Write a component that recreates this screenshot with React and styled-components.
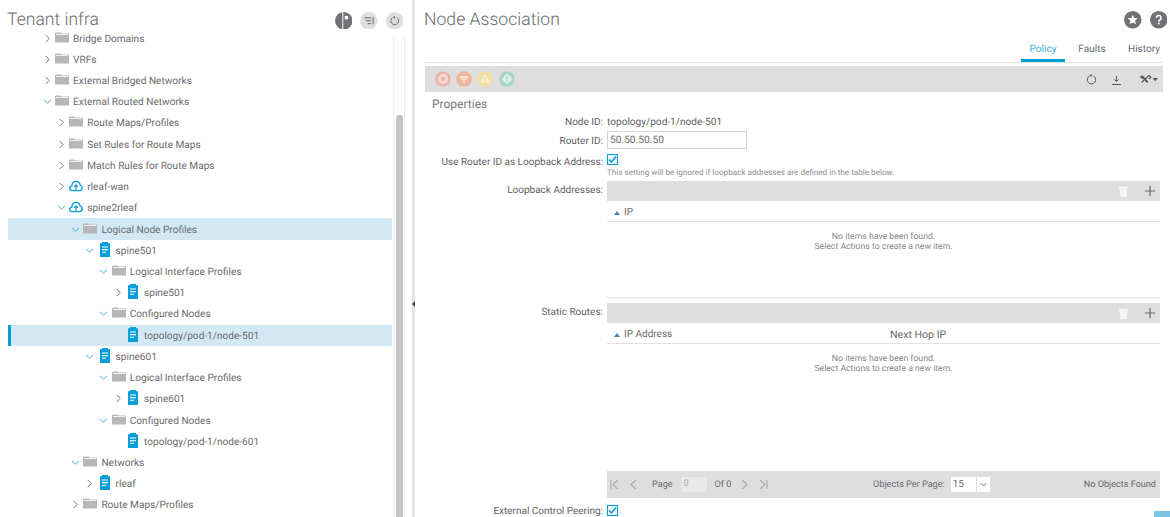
import React from 'react';
import styled, { createGlobalStyle } from 'styled-components';

const Global = createGlobalStyle`
  html, body { margin: 0; padding: 0; background: #fff; }
  body {
    font-family: Roboto, "Liberation Sans", Arial, sans-serif;
    color: #5f6063;
    overflow: hidden;
    text-rendering: geometricPrecision;
  }
`;

const Page = styled.div`
  display: flex;
  position: relative;
  width: 1170px;
  height: 517px;
  overflow: hidden;
`;
const LeftPane = styled.section`
  width: 412px;
  flex: none;
  display: flex;
  flex-direction: column;
`;
const LeftHeader = styled.header`
  height: 27.5px;
  flex: none;
  display: flex;
  align-items: center;
  padding-left: 7px;
  width: 403px;
  box-sizing: border-box;
`;
const Title = styled.h1`
  margin: 0;
  font: 300 17.6px/28px Roboto, "Liberation Sans", sans-serif;
  color: #6a6b6e;
  flex: 1;
  position: relative;
  top: 6px;
`;
const HeadIcons = styled.div`
  display: flex;
  gap: 8px;
  position: relative;
  top: 6.5px;
`;
const TreeWrap = styled.div`
  flex: 1;
  display: flex;
  min-height: 0;
`;
const Tree = styled.div`
  width: 384px;
  margin-left: 8px;
  flex: none;
`;
const Row = styled.div`
  height: 21.22px;
  box-sizing: border-box;
  display: flex;
  align-items: center;
  padding-left: ${p => 33 + p.$level * 14.2}px;
  background: ${p => (p.$active ? '#d2e9f5' : 'transparent')};
  box-shadow: ${p => (p.$bar ? 'inset 3px 0 0 #049fd9' : 'none')};
  font-size: 10.1px;
  color: #6a6b6e;
  white-space: nowrap;
`;
const RowText = styled.span`
  padding-top: 2px;
`;
const Chevron = styled.span`
  width: 12px;
  height: 12px;
  flex: none;
  display: flex;
  align-items: center;
  justify-content: center;
  margin-right: 2px;
`;
const IconSlot = styled.span`
  width: 14px;
  height: 16px;
  flex: none;
  display: flex;
  align-items: center;
  justify-content: center;
  margin-right: 4px;
  position: relative;
  top: -1px;
`;
const ScrollTrack = styled.div`
  width: 7px;
  margin-left: 1px;
  padding: 0 1px 0 2px;
  flex: none;
  border-left: 1px solid #eee;
  border-right: 1px solid #eee;
  margin-top: 6px;
  display: flex;
  flex-direction: column;
`;
const ScrollThumb = styled.div`
  margin-top: 81px;
  flex: 1;
  background: #c4c4c6;
  border-radius: 3px 3px 0 0;
`;
const Divider = styled.div`
  width: 3px;
  flex: none;
  background: #e4e4e5;
  position: relative;
  &::after {
    content: '';
    position: absolute;
    left: 0;
    top: 301px;
    border-style: solid;
    border-width: 3px 3px 3px 0;
    border-color: transparent #444 transparent transparent;
  }
`;
const RightPane = styled.section`
  flex: 1;
  min-width: 0;
  padding: 0 7px 0 10px;
  display: flex;
  flex-direction: column;
`;
const RightHead = styled.header`
  height: 42px;
  display: flex;
  align-items: center;
  flex: none;
`;
const RightTitle = styled.h2`
  margin: 0 0 0 -1px;
  font: 300 17.6px/28px Roboto, "Liberation Sans", sans-serif;
  color: #6a6b6e;
  flex: 1;
  position: relative;
  top: -1px;
`;
const RoundIcons = styled.div`
  display: flex;
  gap: 8px;
  position: relative;
  left: 4px;
  top: -1px;
`;
const Tabs = styled.nav`
  height: 20px;
  display: flex;
  justify-content: flex-end;
  border-bottom: 1px solid #e3e3e4;
  flex: none;
`;
const Tab = styled.a`
  width: ${p => p.$w}px;
  padding-left: ${p => p.$pad || 0}px;
  text-align: center;
  font-size: 10.1px;
  line-height: 15px;
  white-space: nowrap;
  color: ${p => (p.$active ? '#3aaede' : '#6a6b6e')};
  height: 20px;
  box-sizing: border-box;
  border-bottom: ${p => (p.$active ? '3px solid #049fd9' : 'none')};
`;
const Toolbar = styled.div`
  margin-top: 3px;
  height: 26px;
  background: #dedede;
  display: flex;
  align-items: center;
  padding: 0 5px 0 10px;
  flex: none;
`;
const Faults = styled.div`
  display: flex;
  gap: 5.2px;
  flex: 1;
`;
const Tools = styled.div`
  display: flex;
  align-items: center;
  gap: 14px;
`;
const SectionTitle = styled.h3`
  margin: 5px 0 0 7px;
  font: 400 12px/15px Roboto, "Liberation Sans", sans-serif;
  color: #77787b;
  flex: none;
`;
const FieldRow = styled.div`
  display: grid;
  grid-template-columns: 178px 1fr;
  column-gap: 4px;
  height: ${p => p.$h}px;
  margin-top: ${p => p.$mt || 0}px;
  margin-right: 3px;
  flex: none;
  font-size: 10.1px;
  color: #5f6063;
`;
const Label = styled.label`
  text-align: right;
  line-height: ${p => p.$lh || 22}px;
  font-size: 10px;
  white-space: nowrap;
`;
const Value = styled.div`
  line-height: 22px;
  min-width: 0;
`;
const Input = styled.div`
  width: 140px;
  height: 18px;
  box-sizing: border-box;
  border: 1px solid #d5d5d6;
  padding-left: 2px;
  font-size: 10.2px;
  line-height: 17px;
  color: #6a6b6e;
  background: #fff;
`;
const Check = styled.span`
  width: 11px;
  height: 11px;
  display: block;
  box-sizing: border-box;
  border: 1px solid #049fd9;
  background: #e9f6fb;
`;
const CheckWrap = styled.div`
  padding-top: ${p => p.$top || 0}px;
`;
const Hint = styled.div`
  font-size: 8.15px;
  line-height: 11px;
  margin-top: 2px;
  color: #8b8c8f;
  white-space: nowrap;
`;
const TableBar = styled.div`
  height: 20px;
  background: #dedede;
  display: flex;
  align-items: center;
  justify-content: flex-end;
  gap: 17px;
  padding-right: 5px;
`;
const TableHead = styled.div`
  height: 20px;
  display: grid;
  grid-template-columns: 266px 1fr;
  border-bottom: 1px solid #e3e3e4;
  line-height: 20px;
  color: #6a6b6e;
`;
const ColHead = styled.div`
  display: flex;
  align-items: center;
  padding-left: ${p => p.$pad || 0}px;
  padding-top: 2px;
  font-size: ${p => p.$fs || 10}px;
  gap: 4px;
`;
const Caret = styled.span`
  width: 0;
  height: 0;
  border-style: solid;
  border-width: 0 3px 4px 3px;
  border-color: transparent transparent #4f81b5 transparent;
`;
const Empty = styled.div`
  text-align: center;
  font-size: 8.7px;
  line-height: 10px;
  color: #85868a;
  padding-top: ${p => p.$top}px;
`;
const TableEnd = styled.div`
  height: ${p => p.$h}px;
  border-bottom: ${p => (p.$line ? '1px solid #e3e3e4' : 'none')};
`;
const Pager = styled.div`
  height: 27px;
  background: #dedede;
  display: flex;
  align-items: center;
  font-size: 9.1px;
  color: #6a6b6e;
  padding: 0 4px 0 2px;
`;
const PagerNav = styled.div`
  display: flex;
  align-items: center;
  gap: 8px;
`;
const PageLabel = styled.span`
  margin-left: 5px;
`;
const PageBox = styled.div`
  width: 26px;
  height: 15px;
  background: #e9e9ea;
  color: #aaa;
  line-height: 15px;
  padding-left: 3px;
  box-sizing: border-box;
`;
const PagerSpacer = styled.div`
  flex: 1;
`;
const Select = styled.div`
  display: flex;
  width: 39px;
  height: 15px;
  background: #fff;
  margin: 0 94px 0 6px;
  font-size: 10px;
  line-height: 15px;
  align-items: center;
  padding-left: 2px;
  box-sizing: border-box;
  justify-content: space-between;
`;
const SelectArrow = styled.span`
  width: 13px;
  height: 15px;
  border-left: 1px solid #ddd;
  display: flex;
  align-items: center;
  justify-content: center;
`;
const Corner = styled.div`
  position: absolute;
  right: 0;
  bottom: 0;
  width: 16px;
  height: 6px;
  background: #7cc4e6;
`;
const ToolsGlyph = styled.svg`
  margin-left: 3px;
`;
const TickGlyph = styled.svg`
  display: block;
`;

const Folder = () => (
  <svg width="14" height="11" viewBox="0 0 14 11">
    <path d="M0 1.4V10.5H14V1.4H6.5L5.5 .4H.8Z" fill="#b7b7ba" />
    <rect x="1" y="2" width="12" height="1" fill="#f0f0f1" />
  </svg>
);
const Doc = () => (
  <svg width="10" height="15" viewBox="0 0 10 15">
    <path d="M0 1.2H2V0H8V1.2H10V15H0Z" fill="#049fd9" />
    <path d="M2 5H8M2 7.6H8M2 10.2H6" stroke="#fff" strokeWidth="1.1" />
  </svg>
);
const Cloud = () => (
  <svg width="15" height="12" viewBox="0 0 15 12">
    <path d="M4 11H3.2C1.7 11 .7 10 .7 8.6 .7 7.3 1.7 6.3 3 6.2 3.2 3.4 5 1 7.6 1 10 1 11.6 2.8 12 5 13.4 5.4 14.3 6.5 14.3 8 14.3 9.8 13 11 11.4 11Z" fill="none" stroke="#049fd9" strokeWidth="1.4" />
    <path d="M7.5 11V5M5.5 7L7.5 4.8 9.5 7" fill="none" stroke="#049fd9" strokeWidth="1.3" />
  </svg>
);
const Chev = ({ open }) => (
  <svg width="9" height="9" viewBox="0 0 9 9">
    {open
      ? <path d="M1 2.8L4.5 6.2 8 2.8" fill="none" stroke="#4aa9d6" strokeWidth="1" />
      : <path d="M2.8 1L6.2 4.5 2.8 8" fill="none" stroke="#77787b" strokeWidth="1" />}
  </svg>
);
const icons = { folder: <Folder />, doc: <Doc />, cloud: <Cloud /> };

const treeData = [
  [0, 'r', 'folder', 'Bridge Domains'],
  [0, 'r', 'folder', 'VRFs'],
  [0, 'r', 'folder', 'External Bridged Networks'],
  [0, 'o', 'folder', 'External Routed Networks'],
  [1, 'r', 'folder', 'Route Maps/Profiles'],
  [1, 'r', 'folder', 'Set Rules for Route Maps'],
  [1, 'r', 'folder', 'Match Rules for Route Maps'],
  [1, 'r', 'cloud', 'rleaf-wan'],
  [1, 'o', 'cloud', 'spine2rleaf'],
  [2, 'o', 'folder', 'Logical Node Profiles', 'hl'],
  [3, 'o', 'doc', 'spine501'],
  [4, 'o', 'folder', 'Logical Interface Profiles'],
  [5, 'r', 'doc', 'spine501'],
  [4, 'o', 'folder', 'Configured Nodes'],
  [5, '', 'doc', 'topology/pod-1/node-501', 'sel'],
  [3, 'o', 'doc', 'spine601'],
  [4, 'o', 'folder', 'Logical Interface Profiles'],
  [5, 'r', 'doc', 'spine601'],
  [4, 'o', 'folder', 'Configured Nodes'],
  [5, '', 'doc', 'topology/pod-1/node-601'],
  [2, 'o', 'folder', 'Networks'],
  [3, 'r', 'doc', 'rleaf'],
  [2, 'r', 'folder', 'Route Maps/Profiles'],
];

const Circle = ({ fill, children }) => (
  <svg width="17.5" height="17.5" viewBox="0 0 18 18">
    <circle cx="9" cy="9" r="9" fill={fill} />
    {children}
  </svg>
);
const FaultIcon = ({ fill, children }) => (
  <svg width="16" height="16" viewBox="0 0 16 16">
    <circle cx="8" cy="8" r="7.8" fill={fill} />
    {children}
  </svg>
);
const Refresh = ({ color = '#55565a' }) => (
  <svg width="11" height="12" viewBox="0 0 11 12">
    <path d="M3.6 3A4.2 4.2 0 1 0 7.4 3" fill="none" stroke={color} strokeWidth="1" />
    <path d="M5.7 .8V3.8L3.4 2.6Z" fill={color} />
  </svg>
);
const Nav = ({ d }) => (
  <svg width="11" height="13" viewBox="0 0 11 13">
    <path d={d} fill="none" stroke="#a9a9ab" strokeWidth="1.1" />
  </svg>
);
const Trash = () => (
  <svg width="9" height="11" viewBox="0 0 9 11"><path d="M0 .5H9V2.5H8.3L7.6 11H1.4L.7 2.5H0Z" fill="#f5f5f5" /></svg>
);
const Plus = () => (
  <svg width="10" height="10" viewBox="0 0 10 10"><path d="M5 0V10M0 5H10" stroke="#66676a" strokeWidth="1.2" /></svg>
);
const Tick = () => (
  <Check>
    <TickGlyph width="9" height="9" viewBox="0 0 9 9">
      <path d="M1 4.5L3.4 7 8 1.5" fill="none" stroke="#049fd9" strokeWidth="1.5" />
    </TickGlyph>
  </Check>
);

export default function App() {
  return (
    <Page>
      <Global />
      <LeftPane>
        <LeftHeader>
          <Title>Tenant infra</Title>
          <HeadIcons>
            <Circle fill="#707175">
              <path d="M8 0V18" stroke="#fff" strokeWidth="1" />
              <path d="M10 4H13.5V7.5H10Z" fill="#fff" />
            </Circle>
            <Circle fill="#dfdfe0">
              <path d="M4.5 6H11.5M6 9H11.5M8 12H11.5M13.5 5V13" stroke="#66676a" strokeWidth="1" fill="none" />
            </Circle>
            <Circle fill="#dfdfe0">
              <path d="M6.8 5.7A4 4 0 1 0 11.2 5.7" fill="none" stroke="#66676a" strokeWidth="1" />
              <path d="M9.4 3.8V6.8L7 5.6Z" fill="#66676a" />
            </Circle>
          </HeadIcons>
        </LeftHeader>
        <TreeWrap>
          <Tree>
            {treeData.map(([level, chev, icon, text, state], i) => (
              <Row key={i} $level={level} $active={!!state} $bar={state === 'sel'}>
                <Chevron>{chev && <Chev open={chev === 'o'} />}</Chevron>
                <IconSlot>{icons[icon]}</IconSlot>
                <RowText>{text}</RowText>
              </Row>
            ))}
          </Tree>
          <ScrollTrack><ScrollThumb /></ScrollTrack>
        </TreeWrap>
      </LeftPane>
      <Divider />
      <RightPane>
        <RightHead>
          <RightTitle>Node Association</RightTitle>
          <RoundIcons>
            <Circle fill="#707175">
              <path d="M9 3.8L10.5 7.2 14.2 7.5 11.4 10 12.3 13.6 9 11.7 5.7 13.6 6.6 10 3.8 7.5 7.5 7.2Z" fill="#fff" />
            </Circle>
            <Circle fill="#707175">
              <path d="M6.6 7A2.4 2.4 0 1 1 10 9.2C9.2 9.6 9 10 9 11" fill="none" stroke="#fff" strokeWidth="1.6" />
              <rect x="8.1" y="12" width="1.8" height="1.8" fill="#fff" />
            </Circle>
          </RoundIcons>
        </RightHead>
        <Tabs>
          <Tab $active $w={44}>Policy</Tab>
          <Tab $w={54}>Faults</Tab>
          <Tab $w={44} $pad={6}>History</Tab>
        </Tabs>
        <Toolbar>
          <Faults>
            <FaultIcon fill="#ecb3ad">
              <circle cx="8" cy="8" r="5" fill="#f6dcd8" />
              <path d="M6.3 6.3L9.7 9.7M9.7 6.3L6.3 9.7" stroke="#e6a39c" strokeWidth="1.3" />
            </FaultIcon>
            <FaultIcon fill="#ecb498">
              <path d="M3.4 5H12.6L8 12.6Z" fill="#f7e2d6" />
              <path d="M8 6.5V8.6M8 9.4V10.4" stroke="#ecb498" strokeWidth="1.1" />
            </FaultIcon>
            <FaultIcon fill="#f1dfa2">
              <path d="M8 3.2L12.8 11.4H3.2Z" fill="#faf3da" />
              <path d="M8 6V8.6M8 9.4V10.4" stroke="#e3c878" strokeWidth="1.1" />
            </FaultIcon>
            <FaultIcon fill="#a9d3c8">
              <path d="M8 2.6L13.4 8 8 13.4 2.6 8Z" fill="#e0f1ec" />
              <path d="M8 5.2V8.6M8 9.5V10.8" stroke="#96c9bb" strokeWidth="1.2" />
            </FaultIcon>
          </Faults>
          <Tools>
            <Refresh />
            <svg width="11" height="11" viewBox="0 0 11 11">
              <path d="M1 10.5H10" stroke="#55565a" strokeWidth="1" />
              <path d="M5.5 2V7M3.5 5.5L5.5 7.5 7.5 5.5" fill="none" stroke="#55565a" strokeWidth="1" />
            </svg>
            <ToolsGlyph width="19" height="10" viewBox="0 0 21 10">
              <path d="M1 2.5L3.5 .8 6 3 10.5 8 9 9.5 4 4.5 2.5 4.5Z" fill="#55565a" />
              <path d="M11 1L8.5 3.5 3 8.5M11 1L13 3 11 5" fill="none" stroke="#55565a" strokeWidth="1.4" />
              <path d="M15 4H21L18 7.5Z" fill="#55565a" />
            </ToolsGlyph>
          </Tools>
        </Toolbar>
        <SectionTitle>Properties</SectionTitle>
        <FieldRow $h={19}>
          <Label>Node ID:</Label>
          <Value>topology/pod-1/node-501</Value>
        </FieldRow>
        <FieldRow $h={21}>
          <Label $lh={21}>Router ID:</Label>
          <Value><Input>50.50.50.50</Input></Value>
        </FieldRow>
        <FieldRow $h={29}>
          <Label $lh={21}>Use Router ID as Loopback Address:</Label>
          <div>
            <CheckWrap $top={2}><Tick /></CheckWrap>
            <Hint>This setting will be ignored if loopback addresses are defined in the table below.</Hint>
          </div>
        </FieldRow>
        <FieldRow $h={122}>
          <Label $lh={19}>Loopback Addresses:</Label>
          <div>
            <TableBar><Trash /><Plus /></TableBar>
            <TableHead><ColHead $pad={7}><Caret />IP</ColHead></TableHead>
            <Empty $top={10}>No items have been found.<br />Select Actions to create a new item.</Empty>
            <TableEnd $h={45} $line />
          </div>
        </FieldRow>
        <FieldRow $h={195}>
          <Label $lh={19}>Static Routes:</Label>
          <div>
            <TableBar><Trash /><Plus /></TableBar>
            <TableHead>
              <ColHead $pad={7}><Caret />IP Address</ColHead>
              <ColHead $pad={17} $fs={10.6}>Next Hop IP</ColHead>
            </TableHead>
            <Empty $top={10}>No items have been found.<br />Select Actions to create a new item.</Empty>
            <TableEnd $h={97} />
            <Pager>
              <PagerNav>
                <Nav d="M2 2V11M9 2L4 6.5 9 11" />
                <Nav d="M8 2L3 6.5 8 11" />
                <PageLabel>Page</PageLabel>
                <PageBox>0</PageBox>
                <span>Of 0</span>
                <Nav d="M3 2L8 6.5 3 11" />
                <Nav d="M2 2L7 6.5 2 11M9 2V11" />
              </PagerNav>
              <PagerSpacer />
              <span>Objects Per Page:</span>
              <Select>15<SelectArrow><svg width="7" height="5" viewBox="0 0 7 5"><path d="M.5 1L3.5 4 6.5 1" fill="none" stroke="#77787b" /></svg></SelectArrow></Select>
              <span>No Objects Found</span>
            </Pager>
          </div>
        </FieldRow>
        <FieldRow $h={14} $mt={6}>
          <Label $lh={15}>External Control Peering:</Label>
          <CheckWrap $top={1}><Tick /></CheckWrap>
        </FieldRow>
      </RightPane>
      <Corner />
    </Page>
  );
}
